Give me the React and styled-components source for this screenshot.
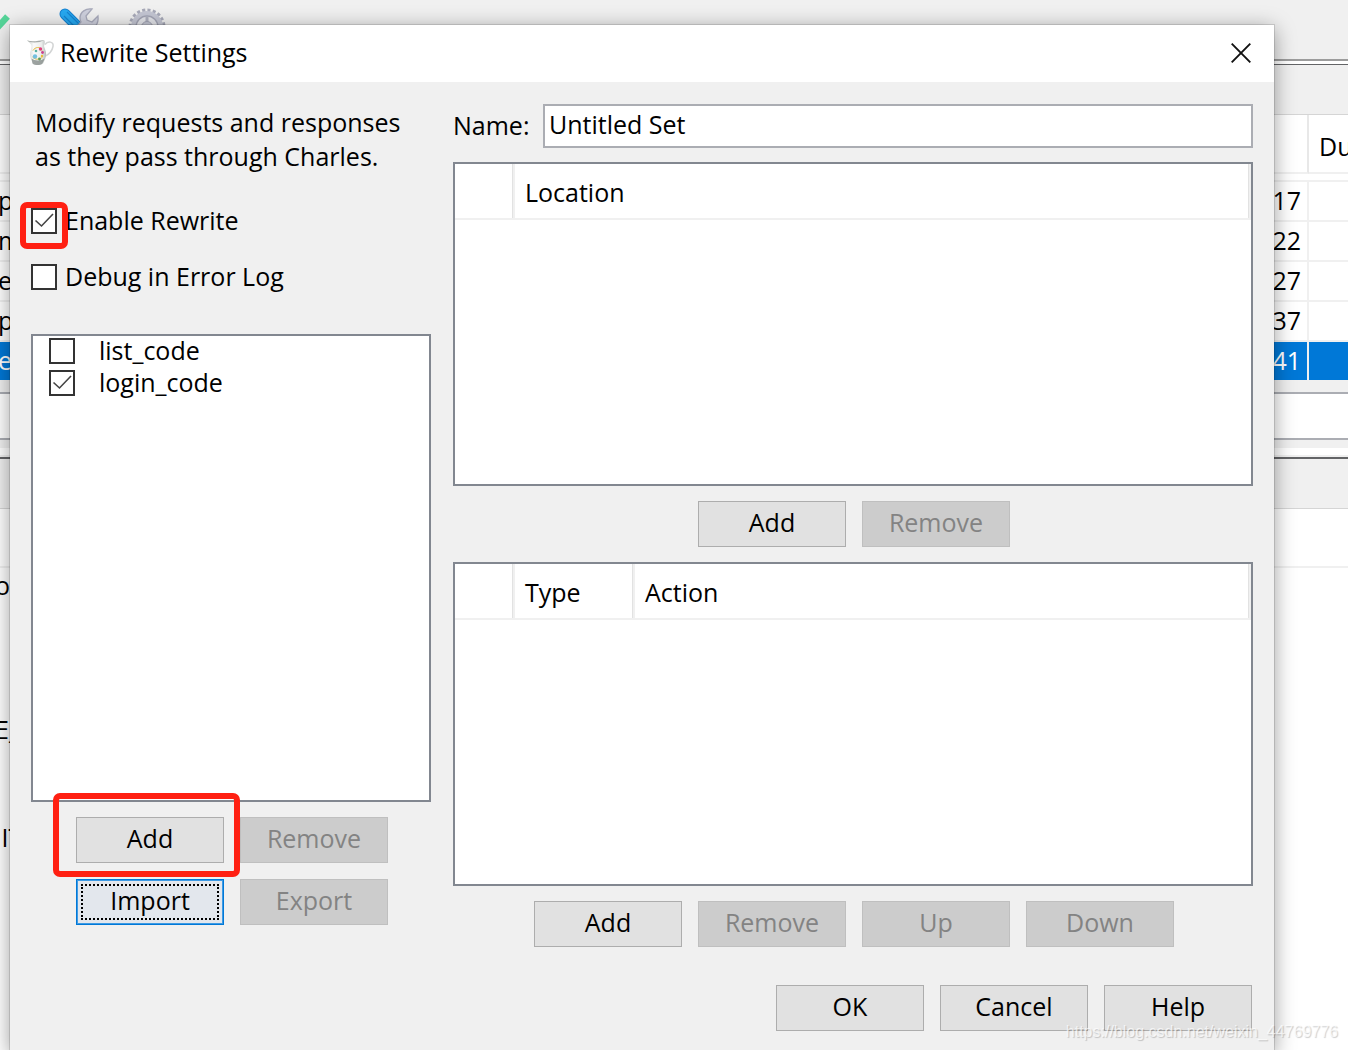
import React from 'react';
import styled, { createGlobalStyle, css } from 'styled-components';

const SESSIONS = [
  { path: 'p', duration: '17' },
  { path: 'm', duration: '22' },
  { path: 'e', duration: '27' },
  { path: 'p', duration: '37' },
  { path: 'e', duration: '41', selected: true },
];

function JugIcon() {
  return (
    <svg width="28" height="28" viewBox="0 0 28 28" aria-hidden="true">
      <defs>
        <linearGradient id="jug" x1="0" x2="1" y1="0" y2="0">
          <stop offset="0" stopColor="#c2c7c5" />
          <stop offset=".35" stopColor="#fafafa" />
          <stop offset=".75" stopColor="#eceeed" />
          <stop offset="1" stopColor="#b5bab8" />
        </linearGradient>
      </defs>
      <path d="M18 5.500c3-4 9-3 8 2-.8 4.500-4 8-8.500 10" fill="none" stroke="#d2d4d4" strokeWidth="1.500" />
      <path d="M0 1.500c5 1.500 11 .5 17-.5 1.500 1.500.5 4 0 6 .5 3 2.500 5 2 9-.4 4-2 6-2.500 8-2 2.500-9 2.500-11 0-.5-2-2.500-5-2.500-8 0-4 1.500-6 1.500-9C4 4.500 2 3.500 0 1.500z" fill="url(#jug)" />
      <path d="M0 1.500c5 1.500 11 .5 17-.5-3 2.500-10 3-14 2z" fill="#a6aba9" />
      <path d="M4.500 19.500c3 2.500 10 2.500 13 0-.5 2-1.500 3.500-2 5-2 2-8 2-10 0z" fill="#7e8683" opacity=".75" />
      <path d="M6 11.500c2-3.500 7-4.500 9 0M5.500 18c3 3 7 3 10 0" stroke="#e6b93f" fill="none" />
      <circle cx="8" cy="17.500" r="2.200" fill="#74bfe0" />
      <circle cx="13.500" cy="10" r="1.700" fill="#e0417c" />
      <circle cx="15.500" cy="13.500" r="1.400" fill="#cc3f8b" />
      <circle cx="9" cy="12" r="1.300" fill="#58b0a0" />
      <circle cx="12.500" cy="20" r="1.400" fill="#5d9c5a" />
      <circle cx="15" cy="17" r="1.200" fill="#e9bd3b" />
    </svg>
  );
}

function CloseIcon() {
  return (
    <svg width="20" height="20" viewBox="0 0 20 20" aria-hidden="true">
      <path d="M.7.7l18.600 18.600M19.300.7L.7 19.300" stroke="#111" strokeWidth="1.900" />
    </svg>
  );
}

function ToolbarIcons() {
  return (
    <svg width="180" height="48" viewBox="0 0 180 48" aria-hidden="true">
      <path d="M-10 22l7 6L7.500 16.500" fill="none" stroke="#56d69a" strokeWidth="6.500" />
      <path d="M65 14l14 14" stroke="#1580d0" strokeWidth="11" strokeLinecap="round" />
      <path d="M65 14l14 14" stroke="#27a9f1" strokeWidth="9" strokeLinecap="round" />
      <path d="M67 12l14 14M64 16l12 12" stroke="#1583d2" strokeWidth="1.200" />
      <path d="M92 9c-6-1-12 3-12 9 0 2 .5 3 1 4l-8 9 6 6 9-9c6 1 11-3 10-12l-6 6-5-2-1-4z" fill="#ced0dd" stroke="#a7a9ba" strokeWidth="1.300" />
      <circle cx="147" cy="27" r="16.500" fill="none" stroke="#a7a9b8" strokeWidth="4" strokeDasharray="3 2.180" />
      <circle cx="147" cy="27" r="13.500" fill="none" stroke="#c4c6d3" strokeWidth="5" />
      <circle cx="147" cy="27" r="11" fill="#e4e5ea" stroke="#a2a4b4" strokeWidth="1.300" />
      <path d="M147 16v22M136 27h22" stroke="#adafbd" strokeWidth="3" />
      <circle cx="147" cy="27" r="5.500" fill="#c4c6d3" stroke="#a2a4b4" />
    </svg>
  );
}

function MainWindow() {
  return (
    <Main>
      <Toolbar>
        <ToolbarIcons />
      </Toolbar>
      <TabStrip />
      <SessionTable>
        <thead>
          <tr>
            <th aria-label="Path" />
            <DurationHead aria-label="Time" />
            <LastHead>Du</LastHead>
          </tr>
        </thead>
        <tbody>
          <SpacerRow>
            <td colSpan={3} />
          </SpacerRow>
          {SESSIONS.map((session) => (
            <SessionRow key={session.duration} $selected={session.selected}>
              <PathCell>{session.path}</PathCell>
              <DurationCell>{session.duration}</DurationCell>
              <td />
            </SessionRow>
          ))}
        </tbody>
      </SessionTable>
      <FilterBar>
        <FilterInput aria-label="Filter" />
      </FilterBar>
      <Divider />
      <TabStrip $thick />
      <DetailHead />
      <Details>
        <span>or</span>
        <span>E_</span>
        <span>&nbsp;IT</span>
      </Details>
    </Main>
  );
}

function App() {
  return (
    <Screen>
      <GlobalStyle />
      <MainWindow />
      <Dialog role="dialog" aria-labelledby="dialog-title">
        <TitleBar>
          <JugIcon />
          <Title id="dialog-title">Rewrite Settings</Title>
          <CloseButton aria-label="Close">
            <CloseIcon />
          </CloseButton>
        </TitleBar>
        <Content>
          <Sidebar>
            <Description>
              Modify requests and responses
              <br />
              as they pass through Charles.
            </Description>
            <Options>
              <CheckLabel>
                <Checkbox type="checkbox" defaultChecked />
                <LabelText>Enable Rewrite</LabelText>
                <CheckMarker />
              </CheckLabel>
              <CheckLabel>
                <Checkbox type="checkbox" />
                <LabelText>Debug in Error Log</LabelText>
              </CheckLabel>
            </Options>
            <SetList>
              <li>
                <SetLabel>
                  <Checkbox type="checkbox" />
                  <LabelText>list_code</LabelText>
                </SetLabel>
              </li>
              <li>
                <SetLabel>
                  <Checkbox type="checkbox" defaultChecked />
                  <LabelText>login_code</LabelText>
                </SetLabel>
              </li>
            </SetList>
            <SetButtons>
              <Marked>
                <Button>Add</Button>
                <ButtonMarker />
              </Marked>
              <Button disabled>Remove</Button>
              <Button $focused>Import</Button>
              <Button disabled>Export</Button>
            </SetButtons>
          </Sidebar>
          <Editor>
            <Field>
              <FieldLabel htmlFor="set-name">Name:</FieldLabel>
              <TextInput id="set-name" defaultValue="Untitled Set" />
            </Field>
            <TableBox>
              <RuleTable>
                <thead>
                  <tr>
                    <RuleHead $width={60} aria-label="Enabled" />
                    <RuleHead>Location</RuleHead>
                  </tr>
                </thead>
              </RuleTable>
            </TableBox>
            <RuleButtons>
              <Button>Add</Button>
              <Button disabled>Remove</Button>
            </RuleButtons>
            <TableBox>
              <RuleTable>
                <thead>
                  <tr>
                    <RuleHead $width={60} aria-label="Enabled" />
                    <RuleHead $width={120}>Type</RuleHead>
                    <RuleHead>Action</RuleHead>
                  </tr>
                </thead>
              </RuleTable>
            </TableBox>
            <RuleButtons>
              <Button>Add</Button>
              <Button disabled>Remove</Button>
              <Button disabled>Up</Button>
              <Button disabled>Down</Button>
            </RuleButtons>
          </Editor>
        </Content>
        <Footer>
          <Button>OK</Button>
          <Button>Cancel</Button>
          <Button>Help</Button>
        </Footer>
      </Dialog>
      <Watermark>https://blog.csdn.net/weixin_44769776</Watermark>
    </Screen>
  );
}

export default App;

const GlobalStyle = createGlobalStyle`
  * {
    box-sizing: border-box;
  }

  body {
    margin: 0;
    background: #fff;
    color: #000;
    font-family: 'Open Sans', 'Noto Sans', sans-serif;
    font-size: 25px;
    line-height: 34px;
  }

  button,
  input {
    font: inherit;
    color: inherit;
  }
`;

const Screen = styled.div`
  position: relative;
  height: 100vh;
  overflow: hidden;
`;

const Main = styled.main`
  display: flex;
  flex-direction: column;
  height: 100%;
`;

const Toolbar = styled.div`
  height: 61px;
  background: #f0f0f0;
  border-bottom: 2px solid #9c9c9c;
`;

const TabStrip = styled.div`
  height: ${({ $thick }) => ($thick ? 52 : 51)}px;
  margin-top: ${({ $thick }) => ($thick ? 0 : 3)}px;
  background: #f0f0f0;
  border-top: ${({ $thick }) => ($thick ? 2 : 1)}px solid #636466;
  border-bottom: 1px solid #d5d5d5;
`;

const SessionTable = styled.table`
  width: 100%;
  table-layout: fixed;
  border-spacing: 0;

  th,
  td {
    padding: 0;
    text-align: left;
    font-weight: normal;
  }

  th {
    height: 59px;
    border-bottom: 2px solid #f0f0f0;
  }
`;

const DurationHead = styled.th`
  width: 100px;
  border-right: 2px solid #e8e8e8;
`;

const LastHead = styled.th`
  width: 39px;

  && {
    padding: 4px 0 0 10px;
  }
`;

const SpacerRow = styled.tr`
  height: 6px;
  line-height: 0;
`;

const SessionRow = styled.tr`
  td {
    height: 40px;
    padding-bottom: 2px;
    border-top: 2px solid #f0f0f0;
    background-clip: padding-box;
  }

  ${({ $selected }) => $selected && css`
    color: #fff;

    td {
      background-color: #0078d7;
    }
  `}
`;

const PathCell = styled.td`
  text-indent: -2px;
`;

const DurationCell = styled.td`
  border-right: 2px solid #f0f0f0;

  && {
    padding-right: 6px;
    text-align: right;
  }
`;

const FilterBar = styled.div`
  padding: 12px 0 8px;
  background: #f0f0f0;
`;

const FilterInput = styled.input`
  display: block;
  width: 100%;
  height: 48px;
  border: solid #abadb3;
  border-width: 2px 0;
  background: #fff;
`;

const Divider = styled.div`
  height: 9px;
  border-bottom: 2px solid #f0f0f0;
`;

const DetailHead = styled.div`
  height: 59px;
  border-bottom: 2px solid #f0f0f0;
`;

const Details = styled.div`
  display: flex;
  flex-direction: column;
  gap: 74px;
  margin-left: -5px;

  span:first-child {
    margin-bottom: 36px;
  }
`;

const Dialog = styled.section`
  position: absolute;
  top: 25px;
  left: 10px;
  right: 74px;
  background: #f0f0f0;
  box-shadow: 0 0 0 1px rgba(0, 0, 0, 0.12), 0 4px 20px rgba(0, 0, 0, 0.4);
`;

const TitleBar = styled.header`
  display: flex;
  align-items: center;
  height: 57px;
  padding: 0 17px 2px;
  background: #fff;
`;

const Title = styled.h1`
  flex: 1;
  margin: 0 0 0 5px;
  padding-bottom: 2px;
  font-size: 25px;
  font-weight: normal;
`;

const CloseButton = styled.button`
  display: flex;
  padding: 6px;
  border: 0;
  background: none;
`;

const Content = styled.div`
  display: flex;
  gap: 22px;
  padding: 22px 21px 0;
`;

const Sidebar = styled.div`
  width: 400px;
`;

const Description = styled.p`
  margin: 1px 0 31px;
  padding-left: 4px;
  white-space: nowrap;
`;

const Options = styled.div`
  display: flex;
  flex-direction: column;
  gap: 22px;
  margin-bottom: 40px;
`;

const CheckLabel = styled.label`
  position: relative;
  display: flex;
  align-items: center;
  height: 34px;
  gap: 8px;
`;

const LabelText = styled.span`
  padding-bottom: 2px;
`;

const Checkbox = styled.input`
  appearance: none;
  width: 26px;
  height: 26px;
  margin: 0;
  border: 2px solid #333;
  background: #fff;

  &:checked {
    background: #fff
      url("data:image/svg+xml,%3Csvg xmlns='http://www.w3.org/2000/svg' viewBox='0 0 22 22'%3E%3Cpath d='M2.500 10.500l6 5.500L20 4' fill='none' stroke='%23444' stroke-width='1.600'/%3E%3C/svg%3E");
  }
`;

const marker = css`
  position: absolute;
  border: 6px solid #ff2012;
  border-radius: 7px;
  pointer-events: none;
`;

const CheckMarker = styled.span`
  ${marker}
  top: -2px;
  left: -11px;
  width: 48px;
  height: 47px;
`;

const SetList = styled.ul`
  height: 468px;
  margin: 0 0 15px;
  padding: 0 16px;
  border: 2px solid #828790;
  background: #fff;
  list-style: none;
`;

const SetLabel = styled.label`
  display: flex;
  align-items: center;
  height: 30px;
  margin-bottom: 2px;
  gap: 24px;
`;

const Buttons = styled.div`
  display: flex;
  flex-wrap: wrap;
  justify-content: center;
  gap: 16px;
  padding-left: 2px;
`;

const SetButtons = styled(Buttons)`
  padding: 0 42px 0 44px;
`;

const RuleButtons = styled(Buttons)`
  margin: 15px 0;
`;

const Button = styled.button`
  width: 148px;
  height: 46px;
  padding: 0 0 4px;
  border: 1px solid #adadad;
  background: #e1e1e1;

  &:disabled {
    border-color: #bfbfbf;
    background: #ccc;
    color: #838383;
  }

  ${({ $focused }) => $focused && css`
    border-color: #0078d7;
    background: #e3e7ed;
    box-shadow: inset 0 0 0 1px #3d9ae4;
    outline: 2px dotted #000;
    outline-offset: -7px;
  `}
`;

const Marked = styled.div`
  position: relative;
`;

const ButtonMarker = styled.span`
  ${marker}
  top: -24px;
  left: -23px;
  width: 187px;
  height: 84px;
`;

const Editor = styled.div`
  flex: 1;
`;

const Field = styled.div`
  display: flex;
  align-items: center;
  margin-bottom: 14px;
`;

const FieldLabel = styled.label`
  width: 90px;
  padding-bottom: 2px;
`;

const TextInput = styled.input`
  flex: 1;
  height: 44px;
  padding: 0 4px 4px;
  border: 2px solid #abadb3;
  background: #fff;
`;

const TableBox = styled.div`
  height: 324px;
  border: 2px solid #828790;
  background: #fff;
`;

const RuleTable = styled.table`
  width: 100%;
  table-layout: fixed;
  border-spacing: 0;
`;

const RuleHead = styled.th`
  width: ${({ $width }) => ($width ? `${$width}px` : 'auto')};
  height: 56px;
  padding: 2px 10px 0;
  border-right: 2px solid #f0f0f0;
  border-bottom: 2px solid #f0f0f0;
  box-shadow: inset -1px 0 #e2e2e2;
  font-weight: normal;
  text-align: left;
`;

const Footer = styled.footer`
  display: flex;
  justify-content: flex-end;
  gap: 16px;
  padding: 23px 22px 21px;
`;

const Watermark = styled.div`
  position: absolute;
  right: 10px;
  bottom: 8px;
  color: rgba(255, 255, 255, 0.7);
  font-family: 'Liberation Sans', sans-serif;
  font-size: 16px;
  line-height: 20px;
  text-shadow: 1px 1px 1px rgba(0, 0, 0, 0.2);
`;
